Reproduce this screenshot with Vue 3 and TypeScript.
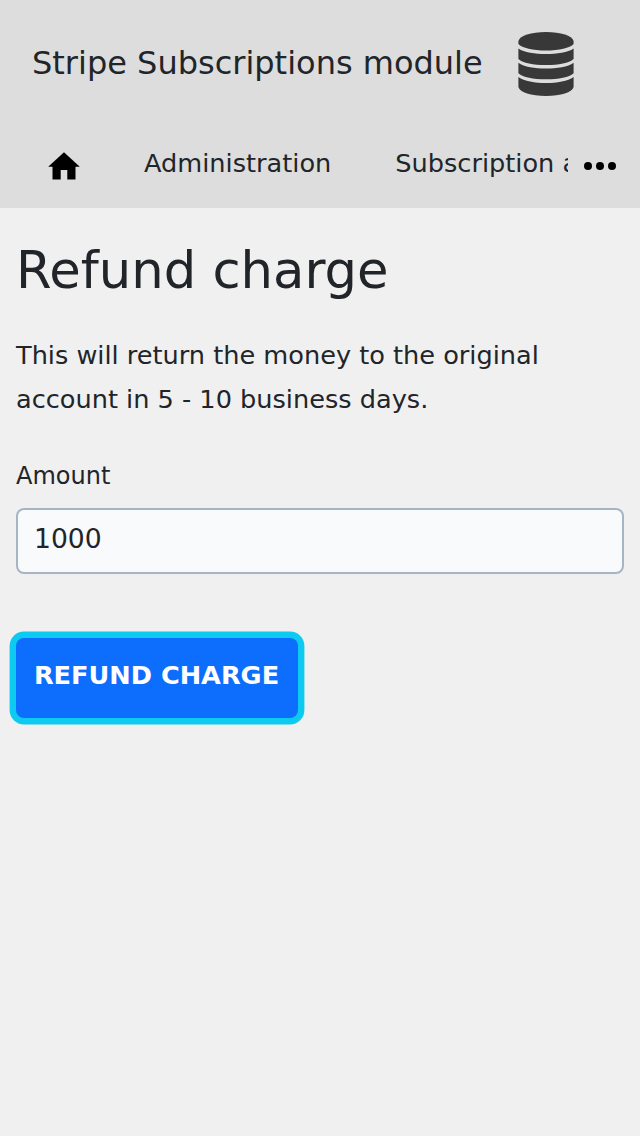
<script setup lang="ts">
import { ref } from 'vue'

const amount = ref<string>('1000')
</script>

<template>
  <div class="page">
    <header>
      <div class="brand">
        <span class="title">Stripe Subscriptions module</span>
        <svg class="db" viewBox="0 0 56 64" width="56" height="64" fill="#383838">
          <path d="M55.600 9v3C52 16 41 18.500 28 18.500S4 16 .4 12V9C2 3.500 13 0 28 0s26 3.500 27.600 9z" />
          <path d="M.4 16.500C6 20.500 17 22 28 22s22-1.500 27.600-5.500V27C51 31 41 33 28 33S5 31 .4 27z" />
          <path d="M.4 30.800C6 35 17 36.500 28 36.500s22-1.500 27.600-5.700V41.300C51 45.300 41 47.300 28 47.300S5 45.300 .4 41.300z" />
          <path d="M.4 45C6 49.300 17 51 28 51s22-1.700 27.600-6v10C54 60.500 43 64 28 64S2 60.500 .4 55z" />
        </svg>
      </div>
      <nav>
        <svg class="home" viewBox="0 0 32 28" width="32" height="28"><path d="M16 .3.2 14.800h4.300v12.700h8.200V18h6.600v9.500h8.200V14.800h4.300z" /></svg>
        <span class="admin">Administration</span>
        <span class="subs">Subscription administration</span>
        <svg class="dots" viewBox="0 0 32 8" width="32" height="8"><circle cx="4" cy="4" r="4" /><circle cx="16" cy="4" r="4" /><circle cx="28" cy="4" r="4" /></svg>
      </nav>
    </header>
    <main>
      <h1>Refund charge</h1>
      <p>This will return the money to the original account in 5 - 10 business days.</p>
      <label for="amount">Amount</label>
      <input id="amount" v-model="amount" type="text" />
      <button type="button">REFUND CHARGE</button>
    </main>
  </div>
</template>

<style>
body { margin: 0; background: #f0f0f0; }
</style>

<style scoped>
.page { min-height: 1136px; background: #f0f0f0; color: #212529; font-family: "DejaVu Sans", sans-serif; }
header { height: 208px; background: #ddd; }
.brand { display: flex; height: 96px; padding: 32px 0 0 32px; box-sizing: border-box; }
.title { width: 486px; font-size: 32px; line-height: 62px; white-space: nowrap; }
.db { flex: none; }
nav { display: flex; height: 112px; padding-left: 48px; }
.home { margin-top: 56px; flex: none; }
.admin, .subs { margin-left: 64px; font-size: 25.600px; line-height: 134px; white-space: nowrap; }
.subs { width: 173px; overflow: hidden; }
.dots { margin: 66px 0 0 16px; flex: none; }
main { padding: 0 16px; }
h1 { margin: 0; padding-top: 31px; font-size: 51.200px; line-height: 62px; font-weight: 400; }
p { margin: 32px 0 0; font-size: 25.600px; line-height: 44px; }
label { display: block; margin-top: 37px; font-size: 24px; line-height: 36px; }
input { display: block; box-sizing: border-box; width: 100%; height: 66px; margin-top: 14px; padding: 0 16px 6px; border: 2px solid #a7b4c3; border-radius: 8px; background: #f8fafc; color: inherit; font: 26.600px "DejaVu Sans", sans-serif; outline: none; }
button { display: block; width: 282px; height: 80px; margin-top: 64px; padding: 0 1px 6px 0; border: 0; border-radius: 8px; background: #0d6efd; box-shadow: 0 0 0 6.400px #0dcaf0; color: #fff; font: 700 25.600px "DejaVu Sans", sans-serif; white-space: nowrap; }
</style>
